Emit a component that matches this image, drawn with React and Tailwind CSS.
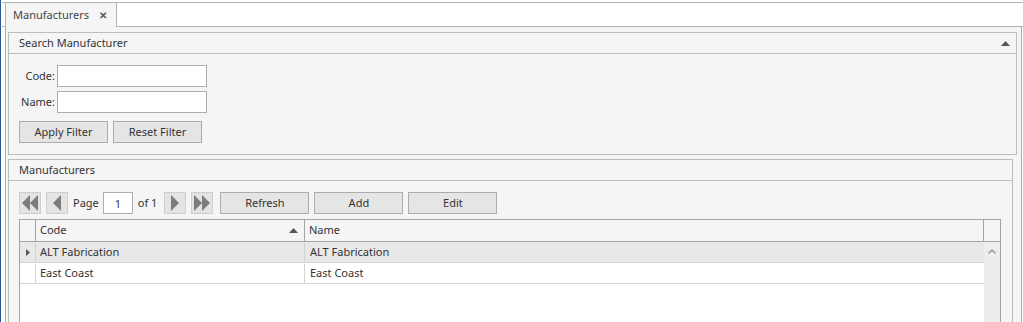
import React from 'react';

const NavBtn = ({ children }) => (
  <button className="w-[22px] h-[22px] border border-[#cfcfcf] bg-[#e4e4e4] flex items-center justify-center">
    <svg width="20" height="20" viewBox="0 0 20 20" fill="#7d7d7d">
      {children}
    </svg>
  </button>
);

const Btn = ({ label }) => (
  <button className="w-[89px] h-[22px] border border-[#adadad] bg-[#e5e5e5] flex items-center justify-center text-[#333]">
    {label}
  </button>
);

const App = () => {
  return (
    <div className="w-[1023px] h-[322px] overflow-hidden bg-white flex font-['Noto_Sans',sans-serif] text-[11px] text-[#333]">
      {/* window edge */}
      <div className="w-px bg-[#2b579a]" />
      <div className="w-px" />

      <div className="flex-1 flex flex-col">
        <div className="h-[2px]" />

        {/* Tab strip */}
        <div className="h-[25px] flex border-t border-[#b4b4b4]">
          <div className="w-[3px] border-b border-[#b4b4b4]" />
          <div className="w-[112px] bg-[#f5f5f5] border-l border-r border-[#b4b4b4] flex items-center pl-[7px] text-[#444]">
            <span>Manufacturers</span>
            <span className="ml-[10px] text-[#555] text-[10px] font-bold">✕</span>
          </div>
          <div className="flex-1 border-b border-[#b4b4b4]" />
        </div>

        {/* Content */}
        <div className="flex-1 ml-[3px] mr-[1px] bg-[#f5f5f5] border-l border-r border-[#acacac] flex flex-col min-h-0">
          {/* Search panel */}
          <div className="mt-[5px] ml-[2px] mr-[4px] border border-[#bdbdbd]">
            <div className="h-[21px] border-b border-[#bdbdbd] flex items-center pl-[10px] pr-[6px]">
              <span className="flex-1">Search Manufacturer</span>
              <svg width="9" height="5" viewBox="0 0 9 5" fill="#555">
                <polygon points="4.5,0 9,5 0,5" />
              </svg>
            </div>
            <div className="pt-[11px] pb-[11px] pl-[10px] flex flex-col gap-[4px]">
              <div className="flex items-center h-[22px]">
                <label className="w-[38px] text-right pr-[2px]">Code:</label>
                <input className="w-[150px] h-[22px] border border-[#abadb3] bg-white outline-none px-1" />
              </div>
              <div className="flex items-center h-[22px]">
                <label className="w-[38px] text-right pr-[2px]">Name:</label>
                <input className="w-[150px] h-[22px] border border-[#abadb3] bg-white outline-none px-1" />
              </div>
              <div className="flex gap-[5px] mt-[4px]">
                <Btn label="Apply Filter" />
                <Btn label="Reset Filter" />
              </div>
            </div>
          </div>

          {/* Manufacturers panel */}
          <div className="flex-1 mt-[4px] ml-[2px] mr-[8px] border-l border-r border-t border-[#bdbdbd] flex flex-col min-h-0">
            <div className="h-[21px] border-b border-[#bdbdbd] flex items-center pl-[10px]">
              Manufacturers
            </div>

            {/* Toolbar */}
            <div className="mt-[11px] pl-[10px] flex items-center h-[22px]">
              <NavBtn>
                <polygon points="10,2 2,10 10,18" />
                <polygon points="18,2 10,10 18,18" />
              </NavBtn>
              <div className="ml-[5px]">
                <NavBtn>
                  <polygon points="14,2 6,10 14,18" />
                </NavBtn>
              </div>
              <span className="ml-[5px]">Page</span>
              <input
                defaultValue="1"
                className="ml-[4px] w-[30px] h-[22px] border border-[#abadb3] bg-white text-center outline-none"
              />
              <span className="ml-[5px]">of 1</span>
              <div className="ml-[7px]">
                <NavBtn>
                  <polygon points="6,2 14,10 6,18" />
                </NavBtn>
              </div>
              <div className="ml-[5px]">
                <NavBtn>
                  <polygon points="2,2 10,10 2,18" />
                  <polygon points="10,2 18,10 10,18" />
                </NavBtn>
              </div>
              <div className="ml-[7px] flex gap-[5px]">
                <Btn label="Refresh" />
                <Btn label="Add" />
                <Btn label="Edit" />
              </div>
            </div>

            {/* Grid */}
            <div className="mt-[5px] ml-[10px] w-[982px] flex-1 border-l border-r border-t border-[#a5a5a5] bg-white flex flex-col min-h-0">
              <div className="h-[22px] flex border-b border-[#a5a5a5] bg-[#f5f5f5]">
                <div className="w-[16px] border-r border-[#a5a5a5]" />
                <div className="w-[269px] border-r border-[#a5a5a5] flex items-center pl-[4px] pr-[6px]">
                  <span className="flex-1">Code</span>
                  <svg width="9" height="5" viewBox="0 0 9 5" fill="#555">
                    <polygon points="4.5,0 9,5 0,5" />
                  </svg>
                </div>
                <div className="flex-1 border-r border-[#a5a5a5] flex items-center pl-[4px]">Name</div>
                <div className="w-[16px]" />
              </div>

              <div className="flex-1 flex">
                <div className="flex-1 flex flex-col">
                  <div className="h-[21px] flex border-b border-[#d4d4d4] bg-[#e8e8e8] pt-px">
                    <div className="w-[16px] border-r border-[#d4d4d4] flex items-center justify-center">
                      <svg width="4" height="7" viewBox="0 0 4 7" fill="#555">
                        <polygon points="0,0 4,3.5 0,7" />
                      </svg>
                    </div>
                    <div className="w-[269px] border-r border-[#d4d4d4] flex items-center pl-[4px]">ALT Fabrication</div>
                    <div className="flex-1 flex items-center pl-[5px]">ALT Fabrication</div>
                  </div>
                  <div className="h-[21px] flex border-b border-[#d4d4d4] bg-white pt-px">
                    <div className="w-[16px] border-r border-[#d4d4d4]" />
                    <div className="w-[269px] border-r border-[#d4d4d4] flex items-center pl-[4px]">East Coast</div>
                    <div className="flex-1 flex items-center pl-[5px]">East Coast</div>
                  </div>
                </div>
                <div className="w-[16px] bg-[#ededed] flex justify-center pt-[7px]">
                  <svg width="8" height="5" viewBox="0 0 8 5" fill="none" stroke="#9a9a9a" strokeWidth="1.5">
                    <polyline points="0.5,4.5 4,1 7.5,4.5" />
                  </svg>
                </div>
              </div>
            </div>
          </div>
        </div>
      </div>
    </div>
  );
};

export default App;
